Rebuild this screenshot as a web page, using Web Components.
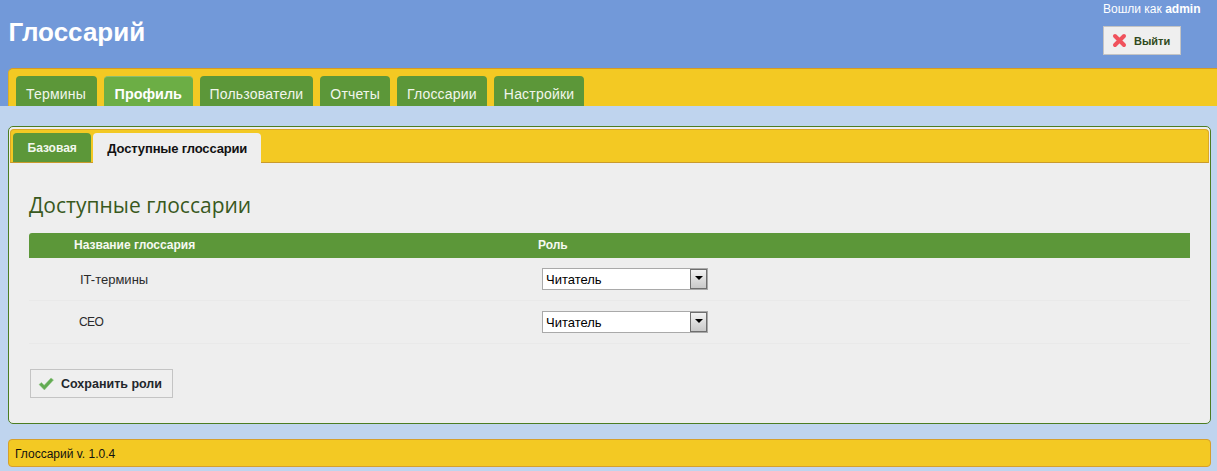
<!DOCTYPE html>
<html lang="ru">
<head>
<meta charset="utf-8">
<title>Глоссарий</title>
<style>
    html, body { margin: 0; padding: 0; }
    body {
        background: #bfd4ee;
        font-family: "Liberation Sans", Arial, sans-serif;
        font-size: 12px;
        color: #222;
    }
</style>
</head>
<body>
<gl-header>
    <span slot="title">Глоссарий</span>
    <gl-nav-tab>Термины</gl-nav-tab>
    <gl-nav-tab active>Профиль</gl-nav-tab>
    <gl-nav-tab>Пользователи</gl-nav-tab>
    <gl-nav-tab>Отчеты</gl-nav-tab>
    <gl-nav-tab>Глоссарии</gl-nav-tab>
    <gl-nav-tab>Настройки</gl-nav-tab>
</gl-header>

<gl-panel>
    <gl-sub-tab slot="tabs">Базовая</gl-sub-tab>
    <gl-sub-tab slot="tabs" active>Доступные глоссарии</gl-sub-tab>
    <gl-roles heading="Доступные глоссарии">
        <gl-role-row name="IT-термины" role="Читатель"></gl-role-row>
        <gl-role-row name="CEO" tight role="Читатель"></gl-role-row>
    </gl-roles>
    <gl-button icon="check" wide>Сохранить роли</gl-button>
</gl-panel>

<gl-footer>Глоссарий v. 1.0.4</gl-footer>

<script>
const ICONS = {
    cross: '<svg width="15" height="15" viewBox="0 0 15 15"><path d="M3 3 L12 12 M12 3 L3 12" fill="none" stroke="#f0525c" stroke-width="4" stroke-linecap="round"/></svg>',
    check: '<svg width="16" height="14" viewBox="0 0 16 14"><path d="M1 7.5 L3.5 5.5 L6.2 8.2 L13 1 L15.5 3 L6.4 13 Z" fill="#62ab52" stroke="#94c786" stroke-width=".5"/></svg>'
};

class gl_Header extends HTMLElement {
    constructor() {
        super();
        this.attachShadow({ mode: 'open' });
        this.shadowRoot.innerHTML = `
            <style>
                :host { display: block; background: #7299d9; height: 106px; }
                .top { display: flex; justify-content: space-between; height: 68px; }
                h1 {
                    margin: 0;
                    padding: 17px 0 0 8.5px;
                    font: bold 26px/30px "Liberation Sans", Arial, sans-serif;
                    color: #fff;
                }
                .login { width: 114px; padding-top: 2px; color: #fff; font-size: 12px; line-height: 14px; }
                .login b { font-weight: bold; }
                .login gl-button { margin-top: 10px; }
                nav {
                    display: flex;
                    gap: 7px;
                    height: 30px;
                    margin-left: 8px;
                    padding: 7px 0 0 7px;
                    background: #f3c923;
                    border-top: 1px solid #d69a25;
                    border-left: 1px solid #e0ae22;
                    border-top-left-radius: 5px;
                }
            </style>
            <div class="top">
                <h1><slot name="title"></slot></h1>
                <div class="login">
                    Вошли как <b>admin</b>
                    <gl-button icon="cross">Выйти</gl-button>
                </div>
            </div>
            <nav><slot></slot></nav>
        `;
    }
}

class gl_Nav_Tab extends HTMLElement {
    constructor() {
        super();
        this.attachShadow({ mode: 'open' });
        this.shadowRoot.innerHTML = `
            <style>
                :host {
                    display: block;
                    height: 30px;
                    padding: 0 10px;
                    background: #5c9739;
                    border-radius: 4px 4px 0 0;
                    color: #f1f6ec;
                    font-size: 14px;
                    line-height: 36px;
                    letter-spacing: .2px;
                }
                :host(:nth-child(2)) { padding-right: 11px; }
                :host([active]) {
                    background: #6cae45;
                    border-top: 1px solid #8cbd6e;
                    height: 29px;
                    padding: 0 10.6px;
                    line-height: 35px;
                    color: #fff;
                    font-weight: bold;
                    font-size: 14.4px;
                    letter-spacing: 0;
                }
            </style>
            <slot></slot>
        `;
    }
}

class gl_Panel extends HTMLElement {
    constructor() {
        super();
        this.attachShadow({ mode: 'open' });
        this.shadowRoot.innerHTML = `
            <style>
                :host {
                    display: block;
                    box-sizing: border-box;
                    width: 1203px;
                    height: 298px;
                    margin: 20px 0 0 8px;
                    padding: 2px 1px 0;
                    background: #eee;
                    border: 1px solid #4c7d22;
                    border-radius: 5px;
                }
                .tabs {
                    display: flex;
                    gap: 2px;
                    box-sizing: border-box;
                    height: 34px;
                    padding: 3px 0 0 2px;
                    background: #f3c923;
                    border: 1px solid #dba826;
                    border-bottom-color: #c99a2c;
                    border-radius: 4px 4px 0 0;
                }
                .body { padding: 0 19px; }
            </style>
            <div class="tabs"><slot name="tabs"></slot></div>
            <div class="body"><slot></slot></div>
        `;
    }
}

class gl_Sub_Tab extends HTMLElement {
    constructor() {
        super();
        this.attachShadow({ mode: 'open' });
        this.shadowRoot.innerHTML = `
            <style>
                :host {
                    display: block;
                    height: 29px;
                    padding: 0 14.5px;
                    background: #5c9739;
                    border-radius: 4px 4px 0 0;
                    color: #f3f7ee;
                    font-size: 12px;
                    font-weight: bold;
                    line-height: 31px;
                }
                :host([active]) {
                    height: 30px;
                    background: #eee;
                    color: #111;
                    padding: 0 14px;
                    font-size: 13px;
                    letter-spacing: -.15px;
                }
            </style>
            <slot></slot>
        `;
    }
}

class gl_Roles extends HTMLElement {
    constructor() {
        super();
        this.attachShadow({ mode: 'open' });
        this.shadowRoot.innerHTML = `
            <style>
                :host { display: block; }
                h2 {
                    margin: 0;
                    padding: 27px 0 0;
                    height: 43px;
                    font: normal 21px/30px "Open Sans", Verdana, sans-serif;
                    color: #39591d;
                }
                .head {
                    display: grid;
                    grid-template-columns: 509px 1fr;
                    height: 25px;
                    background: #5c9739;
                    border-radius: 3px 0 0 0;
                    color: #f6f9f1;
                    font-size: 12px;
                    font-weight: bold;
                    line-height: 25px;
                }
                .head span:first-child { padding-left: 45px; }
            </style>
            <h2></h2>
            <div class="head"><span>Название глоссария</span><span>Роль</span></div>
            <slot></slot>
        `;
        this.shadowRoot.querySelector('h2').textContent = this.getAttribute('heading');
    }
}

class gl_Role_Row extends HTMLElement {
    constructor() {
        super();
        this.attachShadow({ mode: 'open' });
    }

    connectedCallback() {
        let name = this.getAttribute('name');
        let role = this.getAttribute('role');
        this.shadowRoot.innerHTML = `
            <style>
                :host {
                    display: grid;
                    grid-template-columns: 513px 1fr;
                    align-items: center;
                    height: 42px;
                    border-bottom: 1px solid #e9e9e9;
                    font-size: 13px;
                    color: #2b2b2b;
                }
                .name { padding-left: 51px; }
                :host([tight]) .name { padding-left: 50px; font-size: 12px; letter-spacing: -.6px; }
            </style>
            <div class="name">${name}</div>
            <gl-select>${role}</gl-select>
        `;
    }
}

class gl_Select extends HTMLElement {
    constructor() {
        super();
        this.attachShadow({ mode: 'open' });
        this.shadowRoot.innerHTML = `
            <style>
                :host {
                    display: flex;
                    box-sizing: border-box;
                    width: 166px;
                    height: 22px;
                    background: #fff;
                    border: 1px solid #a9a9a9;
                    color: #000;
                    font-size: 13px;
                    line-height: 20px;
                    align-items: center;
                }
                .value { flex: 1; padding: 1px 0 0 3px; }
                .arrow {
                    display: flex;
                    align-items: center;
                    justify-content: center;
                    box-sizing: border-box;
                    width: 17px;
                    height: 20px;
                    background: linear-gradient(#f2f2f2, #c9c9c9);
                    border: 1px solid #6e6e6e;
                }
                .arrow i {
                    width: 0;
                    height: 0;
                    margin-top: -3px;
                    border: 4px solid transparent;
                    border-top: 4px solid #000;
                    border-bottom-width: 0;
                }
            </style>
            <span class="value"><slot></slot></span>
            <span class="arrow"><i></i></span>
        `;
    }
}

class gl_Button extends HTMLElement {
    constructor() {
        super();
        this.attachShadow({ mode: 'open' });
    }

    connectedCallback() {
        let icon = ICONS[this.getAttribute('icon')] || '';
        this.shadowRoot.innerHTML = `
            <style>
                :host {
                    display: flex;
                    box-sizing: border-box;
                    width: 78px;
                    height: 29px;
                    align-items: center;
                    gap: 7px;
                    padding-left: 8px;
                    background: #efefef;
                    border: 1px solid #c4c4c4;
                    color: #2f4a20;
                    font-size: 11px;
                    font-weight: bold;
                    cursor: pointer;
                }
                :host([wide]) {
                    width: 143px;
                    margin: 25px 0 0 1px;
                    padding-left: 7px;
                    color: #22262b;
                    font-size: 12.5px;
                }
                svg { display: block; }
            </style>
            ${icon}<slot></slot>
        `;
    }
}

class gl_Footer extends HTMLElement {
    constructor() {
        super();
        this.attachShadow({ mode: 'open' });
        this.shadowRoot.innerHTML = `
            <style>
                :host {
                    display: block;
                    box-sizing: border-box;
                    width: 1203px;
                    height: 28px;
                    margin: 15px 0 0 8px;
                    padding-left: 6px;
                    background: #f3c923;
                    border: 1px solid #d69f2c;
                    border-radius: 4px;
                    color: #111;
                    font-size: 12px;
                    line-height: 28px;
                }
            </style>
            <slot></slot>
        `;
    }
}

customElements.define('gl-header', gl_Header);
customElements.define('gl-nav-tab', gl_Nav_Tab);
customElements.define('gl-panel', gl_Panel);
customElements.define('gl-sub-tab', gl_Sub_Tab);
customElements.define('gl-roles', gl_Roles);
customElements.define('gl-role-row', gl_Role_Row);
customElements.define('gl-select', gl_Select);
customElements.define('gl-button', gl_Button);
customElements.define('gl-footer', gl_Footer);
</script>
</body>
</html>
